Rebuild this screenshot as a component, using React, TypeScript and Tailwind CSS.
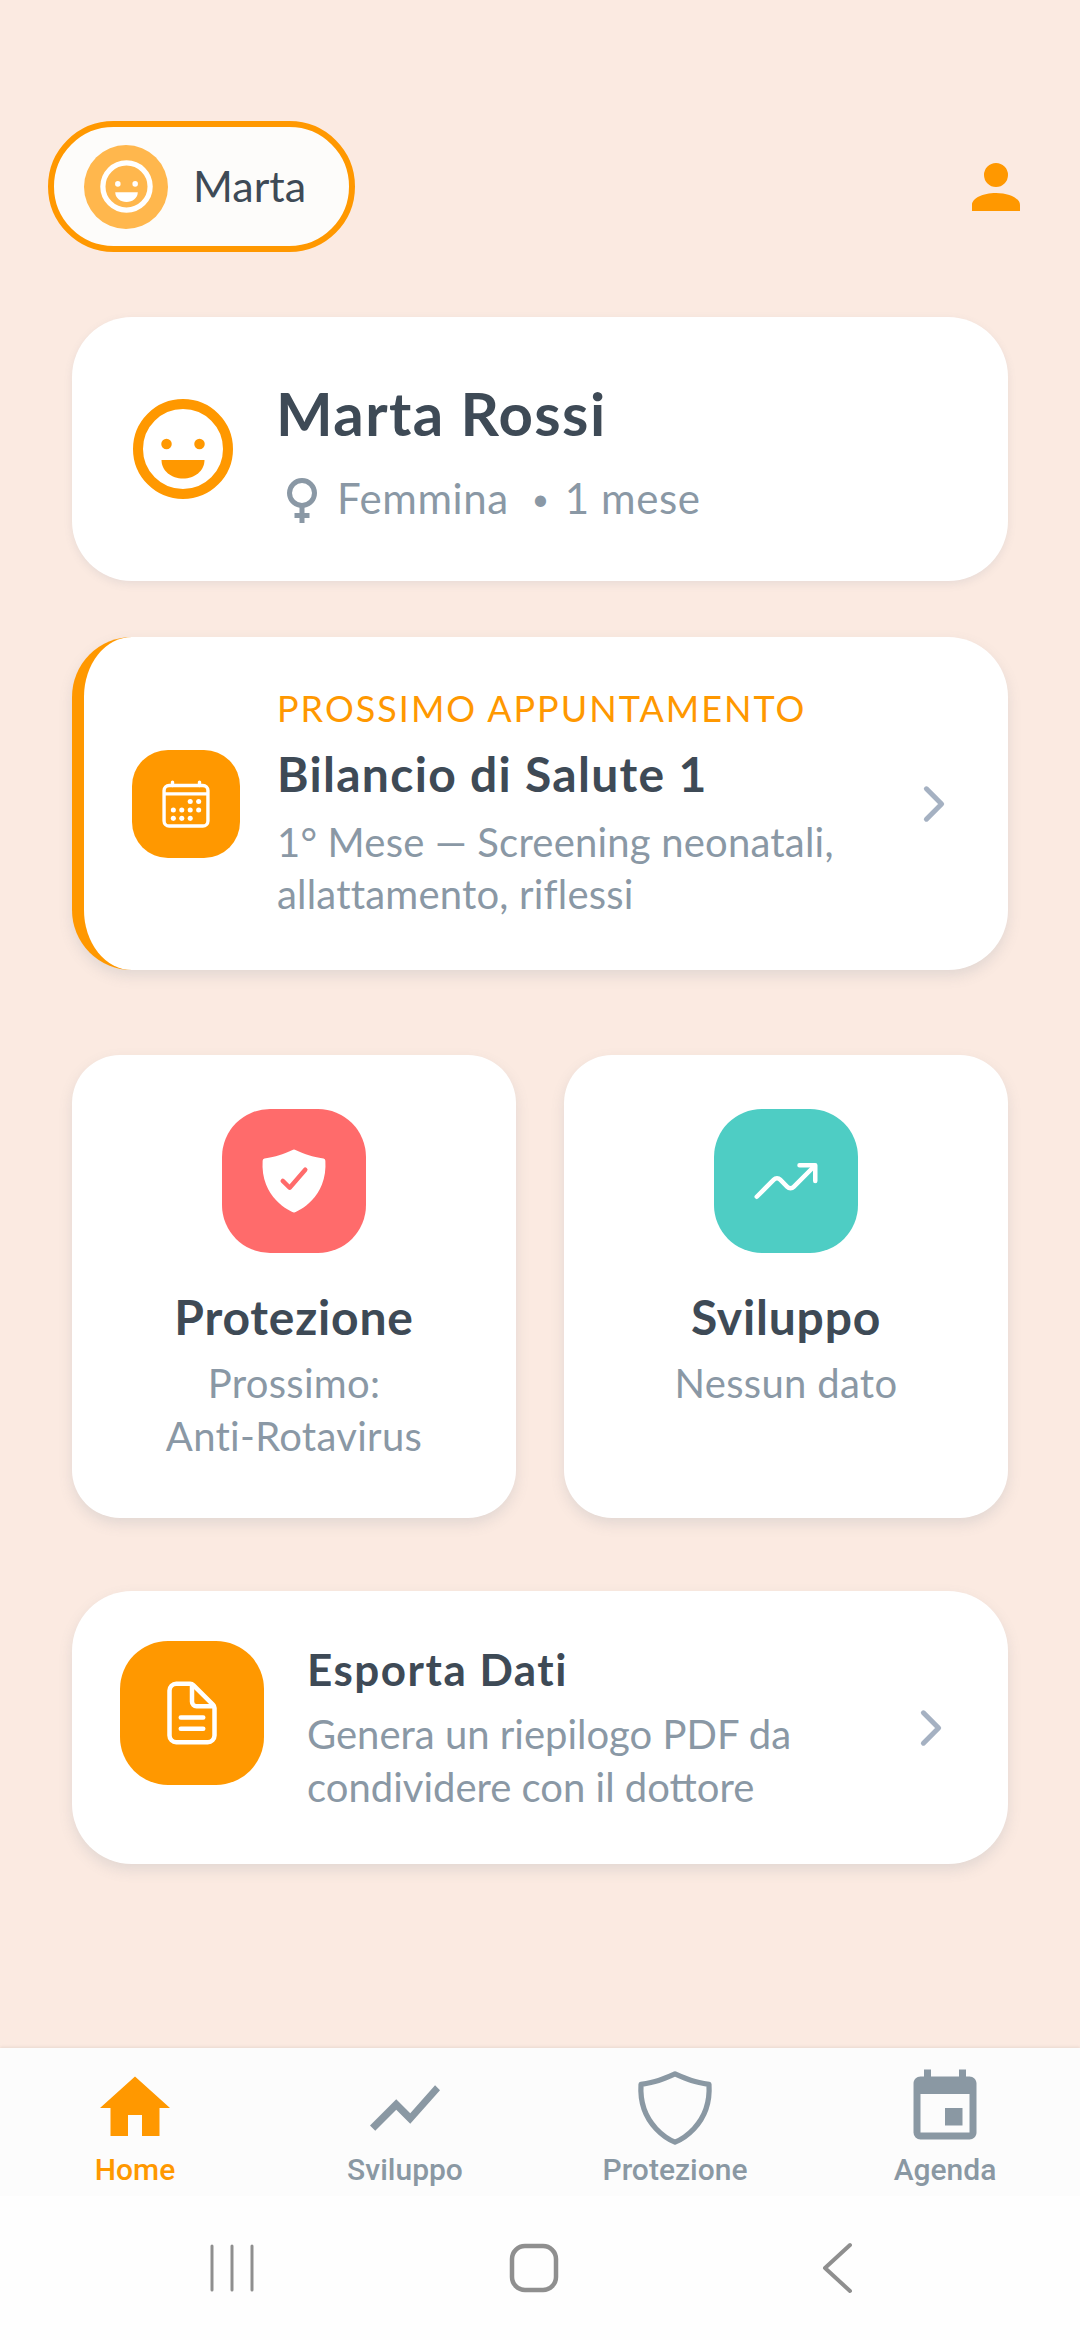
import React from 'react';
import { IoCalendarOutline, IoChevronForward, IoDocumentTextOutline, IoShieldCheckmark, IoShieldOutline, IoTrendingUp } from 'react-icons/io5';
import { MdEvent, MdHome, MdShowChart } from 'react-icons/md';

const FONT = "font-['Lato','Noto_Sans',sans-serif]";

const Smile = ({ size, className }: { size: number; className: string }) => (
  <svg width={size} height={size} viewBox="0 0 24 24" className={className}>
    <circle cx={12} cy={12} r={9} fill="none" stroke="currentColor" strokeWidth={2} />
    <circle cx={8.7} cy={11} r={1.05} fill="currentColor" />
    <circle cx={15.3} cy={11} r={1.05} fill="currentColor" />
    <path d="M7.7 14.2H16.3C16.3 16.4 14.3 17.9 12 17.9S7.7 16.4 7.7 14.2Z" fill="currentColor" />
  </svg>
);

const Account = () => (
  <svg width={72} height={72} viewBox="0 0 24 24" fill="currentColor" className="text-[#FF9800]">
    <path d="M12,4A4,4 0 0,1 16,8A4,4 0 0,1 12,12A4,4 0 0,1 8,8A4,4 0 0,1 12,4M12,14C16.42,14 20,15.79 20,18V20H4V18C4,15.79 7.58,14 12,14Z" />
  </svg>
);

const Female = () => (
  <svg width={60} height={60} viewBox="0 0 24 24" fill="currentColor" className="text-[#8A98A5]">
    <path d="M12,4A6,6 0 0,1 18,10C18,12.97 15.84,15.44 13,15.92V18H15V20H13V22H11V20H9V18H11V15.92C8.16,15.44 6,12.97 6,10A6,6 0 0,1 12,4M12,6A4,4 0 0,0 8,10A4,4 0 0,0 12,14A4,4 0 0,0 16,10A4,4 0 0,0 12,6Z" />
  </svg>
);

const tabs = [
  { label: 'Home', icon: <MdHome size={84} />, active: true },
  { label: 'Sviluppo', icon: <MdShowChart size={84} />, active: false },
  { label: 'Protezione', icon: <IoShieldOutline size={84} />, active: false },
  { label: 'Agenda', icon: <MdEvent size={84} />, active: false },
];

const SHADOW = 'shadow-[0_6px_14px_rgba(100,116,139,0.16)]';

const FeatureCard = ({ color, icon, title, lines }: { color: string; icon: React.ReactNode; title: string; lines: string[] }) => (
  <div className={`bg-white rounded-[48px] ${SHADOW} flex flex-col items-center pt-[54px]`}>
    <div className={`w-[144px] h-[144px] rounded-[48px] flex items-center justify-center text-white ${color}`}>{icon}</div>
    <div className="mt-[33px] text-[48px] leading-[62px] tracking-[0.8px] font-bold text-[#3E4A56]">{title}</div>
    <div className="mt-[9px] text-[40px] leading-[53px] tracking-[0.3px] text-[#8A98A5] text-center">
      {lines.map((l) => (
        <div key={l}>{l}</div>
      ))}
    </div>
  </div>
);

export default function App() {
  return (
    <div className={`w-[1080px] h-[2340px] flex flex-col bg-[#FBEAE1] ${FONT}`}>
      <main className="flex-1 pt-[121px]">
        {/* Header */}
        <div className="flex items-center justify-between pl-[48px] pr-[48px]">
          <div className="w-[307px] h-[131px] rounded-full border-[6px] border-[#FF9800] bg-[#FDFCFA] flex items-center pl-[30px] gap-[25px]">
            <div className="w-[84px] h-[84px] rounded-full bg-[#FFB74D] flex items-center justify-center">
              <Smile size={63} className="text-white" />
            </div>
            <span className="text-[43px] text-[#3E4A56]">Marta</span>
          </div>
          <Account />
        </div>

        <div className="mx-[72px]">
          {/* Child */}
          <div className="bg-white rounded-[60px] shadow-[0_3px_8px_rgba(100,116,139,0.12)] mt-[65px] h-[264px] flex items-center pl-[51px] gap-[33px]">
            <Smile size={120} className="text-[#FF9800]" />
            <div className="pt-[7px]">
              <div className="text-[60px] leading-[72px] tracking-[1.4px] font-bold text-[#3E4A56]">Marta Rossi</div>
              <div className="mt-[19px] flex items-center text-[42px] leading-[60px] tracking-[0.6px] text-[#8A98A5] -ml-[4px]">
                <Female />
                <span className="ml-[5px]">Femmina</span>
                <span className="ml-[23px] text-[30px]">•</span>
                <span className="ml-[15px]">1 mese</span>
              </div>
            </div>
          </div>

          {/* Next appointment */}
          <div className={`bg-white rounded-[60px] ${SHADOW} mt-[56px] h-[333px] border-l-[12px] border-[#FF9800] flex items-center pl-[48px] pr-[47px]`}>
            <div className="w-[108px] h-[108px] shrink-0 rounded-[36px] bg-[#FF9800] flex items-center justify-center text-white">
              <IoCalendarOutline size={54} />
            </div>
            <div className="ml-[37px] flex-1 pb-[4px]">
              <div className="text-[36px] leading-[50px] tracking-[2px] text-[#FF9800]">PROSSIMO APPUNTAMENTO</div>
              <div className="mt-[10px] text-[48px] leading-[62px] tracking-[1.3px] font-bold text-[#3E4A56]">Bilancio di Salute 1</div>
              <div className="mt-[11px] text-[40px] leading-[52px] tracking-[0.2px] text-[#8A98A5]">
                1° Mese — Screening neonatali,
                <br />
                allattamento, riflessi
              </div>
            </div>
            <IoChevronForward size={54} className="text-[#A5B1C2]" />
          </div>

          {/* Feature cards */}
          <div className="mt-[85px] h-[463px] grid grid-cols-2 gap-[48px]">
            <FeatureCard color="bg-[#FF6B6B]" icon={<IoShieldCheckmark size={72} />} title="Protezione" lines={['Prossimo:', 'Anti-Rotavirus']} />
            <FeatureCard color="bg-[#4ECDC4]" icon={<IoTrendingUp size={72} />} title="Sviluppo" lines={['Nessun dato']} />
          </div>

          {/* Export */}
          <div className={`bg-white rounded-[60px] ${SHADOW} mt-[73px] h-[273px] flex items-center pl-[48px] pr-[50px]`}>
            <div className="self-start mt-[50px] w-[144px] h-[144px] shrink-0 rounded-[48px] bg-[#FF9800] flex items-center justify-center text-white">
              <IoDocumentTextOutline size={72} />
            </div>
            <div className="ml-[43px] flex-1">
              <div className="text-[44px] leading-[56px] tracking-[1.5px] font-bold text-[#3E4A56]">Esporta Dati</div>
              <div className="mt-[11px] text-[40px] leading-[53px] text-[#8A98A5]">
                Genera un riepilogo PDF da
                <br />
                condividere con il dottore
              </div>
            </div>
            <IoChevronForward size={54} className="text-[#A5B1C2]" />
          </div>
        </div>
      </main>

      {/* Tab bar */}
      <nav className="h-[148px] bg-[#FCFCFC] grid grid-cols-4 font-['Roboto',sans-serif] shadow-[0_-1px_3px_rgba(0,0,0,0.08)]">
        {tabs.map((t) => (
          <div key={t.label} className={`flex flex-col items-center pt-[18px] ${t.active ? 'text-[#FF9800]' : 'text-[#8A98A3]'}`}>
            {t.icon}
            <span className="text-[30px] leading-[36px] font-medium mt-[2px]">{t.label}</span>
          </div>
        ))}
      </nav>

      {/* System navigation */}
      <div className="h-[144px] bg-[#FEFEFE] text-[#8F8F8F] flex items-center pl-[208px] gap-[253px]">
        <svg width={48} height={48} viewBox="0 0 48 48" stroke="currentColor" strokeWidth={3} strokeLinecap="round" className="shrink-0">
          <path d="M4 2v44M24 2v44M44 2v44" />
        </svg>
        <div className="flex items-center gap-[262px]">
          <svg width={50} height={50} viewBox="0 0 50 50" fill="none" stroke="currentColor" strokeWidth={4.5} className="shrink-0">
            <rect x={3} y={3} width={44} height={44} rx={13} />
          </svg>
          <svg width={32} height={52} viewBox="0 0 32 52" fill="none" stroke="currentColor" strokeWidth={4} strokeLinecap="round" strokeLinejoin="round" className="shrink-0">
            <path d="M29 3L4 26l25 23" />
          </svg>
        </div>
      </div>
    </div>
  );
}
